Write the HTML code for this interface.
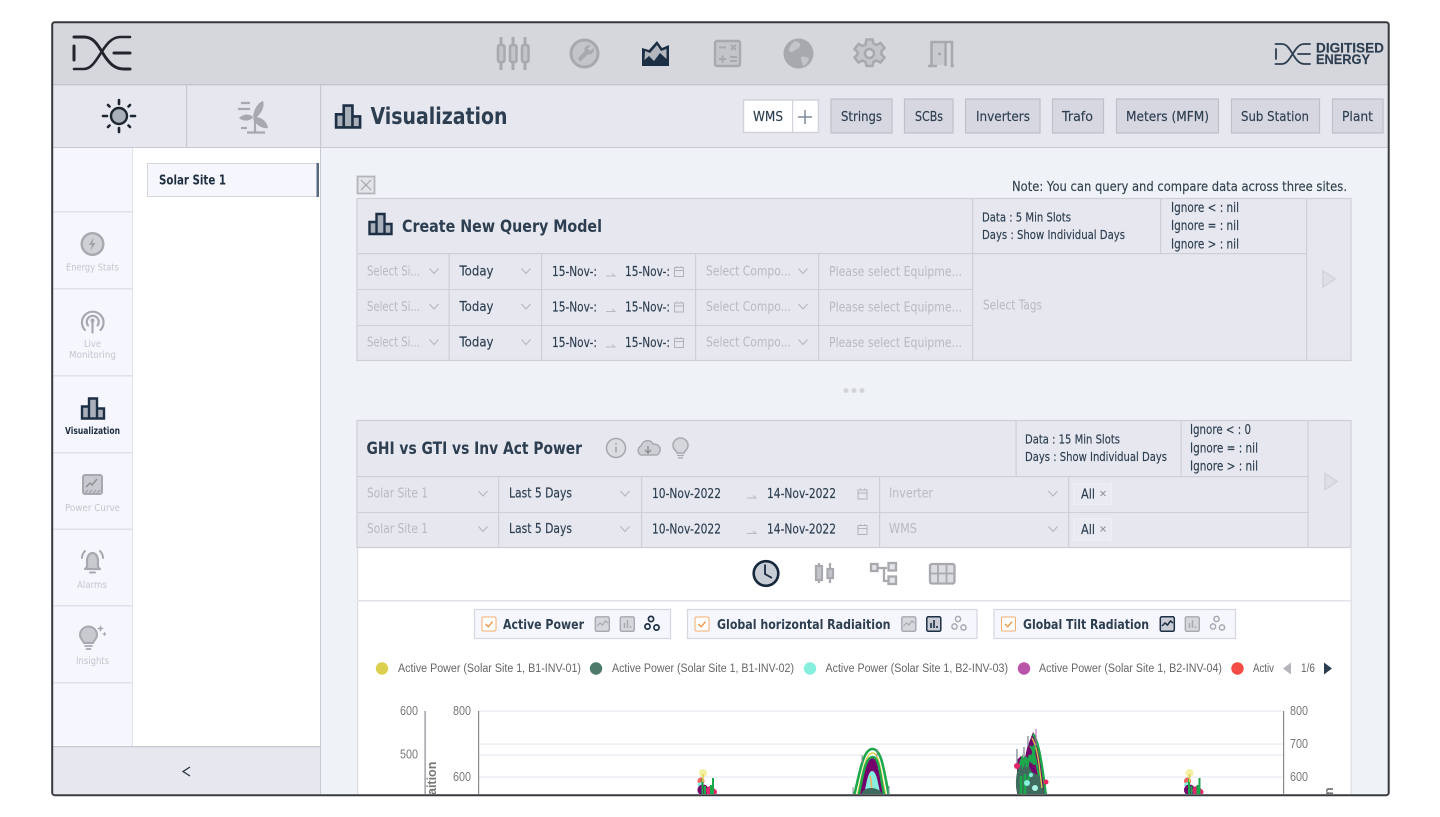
<!DOCTYPE html>
<html><head><meta charset="utf-8"><title>Visualization</title>
<style>
html,body{margin:0;padding:0;background:#fff;width:1440px;height:817px;overflow:hidden}
svg{display:block}
text{font-family:"DejaVu Sans","Liberation Sans",sans-serif;font-size:13px;fill:#2c3e50;stroke:#2c3e50;stroke-width:.15px}
.p{fill:#b9bac1;stroke:none}
.b{font-weight:bold;stroke:none}
.n{font-size:10px;fill:#c4c5cb;stroke:none}
.l{font-family:"Liberation Sans",sans-serif;font-size:11.5px;fill:#666;stroke:none}
.a{font-family:"Liberation Sans",sans-serif;font-size:12.5px;fill:#777;stroke:none}
.s{font-size:12px}
</style></head><body>
<svg width="1440" height="817" viewBox="0 0 1440 817" xmlns="http://www.w3.org/2000/svg">
<defs>
<clipPath id="fr"><rect x="53" y="23" width="1335" height="771"/></clipPath>
<g id="bars"><path d="M1 9h7v12H1zM8 1h8v20H8zM16 11h7v10h-7z" fill="#aab0ba" stroke="#1c2f45" stroke-width="2.4"/></g>
<path id="ch" d="M-4.5-2.5L0 2.5L4.500-2.500" fill="none" stroke="#b3b4bb" stroke-width="1"/>
<g id="cal" fill="none" stroke="#b3b4bb" stroke-width="1"><rect x="-4.500" y="-4" width="9" height="9"/><path d="M-4.500-1h9M-2-5.500v2M2-5.500v2"/></g>
<path id="ar" d="M0 0h9l-3-2.500" fill="none" stroke="#b9bac1" stroke-width="1"/>
<g id="ln"><rect x=".8" y=".8" width="14" height="14.500" rx="1.500" fill="#d6d7dd" stroke="#a8a9af" stroke-width="1.400"/><path d="M2.500 10l3-3 2.500 2 3-4 2.500 2" fill="none" stroke="#a8a9af" stroke-width="1.200"/></g>
<g id="lnd"><rect x=".8" y=".8" width="14" height="14.500" rx="1.500" fill="#c9ccd4" stroke="#1c2f45" stroke-width="1.500"/><path d="M2.500 10l3-3 2.500 2 3-4 2.500 2" fill="none" stroke="#1c2f45" stroke-width="1.500"/></g>
<g id="br"><rect x=".8" y=".8" width="14" height="14.500" rx="1.500" fill="#d6d7dd" stroke="#a8a9af" stroke-width="1.400"/><path d="M5 12V7M8 12V4M11 12v-2" fill="none" stroke="#a8a9af" stroke-width="1.400"/></g>
<g id="brd"><rect x=".8" y=".8" width="14" height="14.500" rx="1.500" fill="#c9ccd4" stroke="#1c2f45" stroke-width="1.500"/><path d="M5 12V7M8 12V4M11 12v-2" fill="none" stroke="#1c2f45" stroke-width="1.600"/></g>
<g id="sc" fill="none" stroke="#a8a9af" stroke-width="1.500"><circle cx="7" cy="3.500" r="2.600"/><circle cx="3.500" cy="11" r="2.600"/><circle cx="12.500" cy="12" r="2.600"/></g>
<g id="scd" fill="none" stroke="#1c2f45" stroke-width="1.700"><circle cx="7" cy="3.500" r="2.600"/><circle cx="3.500" cy="11" r="2.600"/><circle cx="12.500" cy="12" r="2.600"/></g>
<g id="ck"><rect x=".5" y=".5" width="14" height="14" rx="1.500" fill="#fff" stroke="#f5ae6c"/><path d="M4 7.500l2.800 2.800L11 5" fill="none" stroke="#f0923c" stroke-width="1.300"/></g>
</defs>

<rect width="1440" height="817" fill="#fff"/>
<g clip-path="url(#fr)">
<rect x="53" y="23" width="1335" height="62" fill="#d6d7dc"/>
<rect x="53" y="85" width="1335" height="63" fill="#e6e7ef"/>
<rect x="53" y="84" width="1335" height="1.300" fill="#c4c5cc"/>
<rect x="53" y="147" width="1335" height="1.300" fill="#c8c9d0"/>
<rect x="186" y="85" width="1.200" height="63" fill="#c8c9d0"/>
<rect x="320" y="85" width="1.200" height="710" fill="#c8c9d0"/>
<rect x="53" y="148" width="79" height="598" fill="#f6f7fe"/>
<rect x="132" y="148" width="1" height="598" fill="#e1e2e9"/>
<rect x="133" y="148" width="187" height="598" fill="#fff"/>
<rect x="321" y="148" width="1067" height="647" fill="#eff2f6"/>
<rect x="53" y="746" width="267" height="49" fill="#e6e7ef"/>
<rect x="53" y="746" width="267" height="1.200" fill="#c8c9d0"/>
<path d="M190 767l-7 4.500 7 4.500" fill="none" stroke="#25303c" stroke-width="1.200"/>

<!-- nav separators -->
<g fill="#e0e1e9"><rect x="53" y="211" width="79" height="1.500"/><rect x="53" y="288" width="79" height="1.500"/><rect x="53" y="375" width="79" height="1.500"/><rect x="53" y="452" width="79" height="1.500"/><rect x="53" y="528.500" width="79" height="1.500"/><rect x="53" y="605" width="79" height="1.500"/><rect x="53" y="682" width="79" height="1.500"/></g>

<!-- logo -->
<g fill="none" stroke="#22252c" stroke-width="3" stroke-linecap="round">
<path d="M74 37H84C96 37 100 50 106 58C111 65 116 69 124 69H130"/><path d="M74 69H84C98 69 103 37 120 37H130" stroke-width="2.600"/><path d="M114 53H130"/><path d="M74 46V60"/>
</g>
<g fill="none" stroke="#2c3e50" stroke-width="1.800" stroke-linecap="round">
<path d="M1275.500 44H1282C1288 44 1291 52 1294 56C1297 61 1300 64 1305 64H1310"/><path d="M1275.500 64H1282C1291 64 1294 44 1304 44H1310"/><path d="M1298 54H1310"/><path d="M1276 49V59"/>
</g>
<text x="1316" y="52.500" textLength="68" lengthAdjust="spacingAndGlyphs" style="font-family:'Liberation Sans',sans-serif;font-weight:bold;font-size:13.5px">DIGITISED</text>
<text x="1316" y="64" textLength="54" lengthAdjust="spacingAndGlyphs" style="font-family:'Liberation Sans',sans-serif;font-weight:bold;font-size:13.5px">ENERGY</text>

<!-- top icons -->
<g fill="#c4c5ca" stroke="#a8a9ae" stroke-width="2.600">
<path d="M501 37V70M513 37V70M525 37V70" fill="none" stroke-width="3"/>
<rect x="498" y="45" width="6.500" height="17" rx="2"/><rect x="510" y="45" width="6.500" height="17" rx="2"/><rect x="522" y="45" width="6.500" height="17" rx="2"/>
<circle cx="584.500" cy="53.500" r="13.500" stroke-width="3"/>
</g>
<path d="M591 45.500a5 5 0 0 0-6.500 6l-7 7 3 3 7-7a5 5 0 0 0 6-6.500l-3.300 3-2.700-2.500z" fill="#a8a9ae"/>
<path d="M642 48L649 50L657 41L662 48L669 45V66H642z" fill="#1c2f45"/>
<path d="M645 51L650 53L657 45L661 51L666.500 49V59L660 53L654 61L649 56L644.500 60z" fill="#b3b6bd"/>
<rect x="715" y="41" width="25" height="25" rx="2" fill="#c4c5ca" stroke="#a8a9ae" stroke-width="2.400"/>
<path d="M719 47.500h7M731 45l5 5M736 45l-5 5M719 59h7M722.500 55.500v7M730 57h7M730 61h7" fill="none" stroke="#a8a9ae" stroke-width="2"/>
<circle cx="798.500" cy="53.500" r="15" fill="#a8a9ae"/>
<path d="M795 41c3 1 6 2 5 5s-4 3-6 5-4 1-5 0c0-4 3-8 6-10zM801 57c3-1 6 0 8 2-1 3-3 6-6 7 0-3-3-6-2-9z" fill="#c4c5ca"/>
<g transform="translate(869.500 53.500)"><path d="M-3-14h6l1 4 3 1.500 4-2 4 5-3 3v3.500l3 3-4 5-4-2-3 1.500-1 4h-6l-1-4-3-1.500-4 2-4-5 3-3V-1.500l-3-3 4-5 4 2 3-1.500z" fill="#c4c5ca" stroke="#a8a9ae" stroke-width="2.500"/><circle r="4.500" fill="#d6d7dc" stroke="#a8a9ae" stroke-width="2.500"/></g>
<rect x="932" y="43" width="12" height="22" fill="#c9cacf"/><circle cx="939.500" cy="54" r="1.300" fill="#9a9ba1"/>
<path d="M928 66h9M931.500 66V42h14v24M937 42h15v24h2" fill="none" stroke="#a8a9ae" stroke-width="2.600"/>

<!-- sun -->
<circle cx="119" cy="116" r="8" fill="#aab0ba" stroke="#1c2530" stroke-width="2.400"/>
<path d="M119 100v4M119 128v4M103 116h4M131 116h4M108 105l1.500 1.500M130 105l-1.500 1.500M108 127l1.500-1.500M130 127l-1.500-1.500" stroke="#1c2530" stroke-width="2.600" stroke-linecap="round"/>
<!-- wind -->
<g fill="#a8a9ae">
<path d="M253 117C254 108 259 102 263 101C265 106 262 113 255 119z"/>
<path d="M255 117C262 117 267 122 268 128C262 129 256 125 253 119z"/>
<path d="M252 116C247 113 242 115 239 118C244 122 249 121 253 118z"/>
</g>
<path d="M255 120V132M247 132.500H265M238 109H250M241 103H250M241 128H247" fill="none" stroke="#a8a9ae" stroke-width="2.200"/>

<!-- Site -->
<rect x="147.500" y="163.500" width="171" height="33" fill="#f6f7fe" stroke="#d5d6dd"/>
<rect x="316.500" y="163" width="2.500" height="34" fill="#566a80"/>
<text class="b" x="159" y="184.500" textLength="67" lengthAdjust="spacingAndGlyphs" style="fill:#1f2f40">Solar Site 1</text>

<!-- Nav -->
<circle cx="92.500" cy="244" r="10.800" fill="#cfd0d6" stroke="#a8a9ae" stroke-width="2.400"/>
<path d="M94 237l-5 8h3l-1.500 6 5-8h-3z" fill="#a0a1a7"/>
<text class="n" x="66" y="270.500" textLength="53" lengthAdjust="spacingAndGlyphs">Energy Stats</text>
<g fill="none" stroke="#a8a9ae" stroke-width="2.200" stroke-linecap="round">
<path d="M85 330a10.800 10.800 0 1 1 15.500 0"/><path d="M88 325.500a6 6 0 1 1 9.500 0"/><path d="M92.500 322v10.500"/></g>
<circle cx="92.500" cy="320.500" r="2" fill="#a8a9ae"/>
<text class="n" x="84" y="347" textLength="17" lengthAdjust="spacingAndGlyphs">Live</text>
<text class="n" x="69" y="358" textLength="47" lengthAdjust="spacingAndGlyphs">Monitoring</text>
<use href="#bars" transform="translate(81 397.500)"/>
<text class="n b" x="65" y="434" textLength="55" lengthAdjust="spacingAndGlyphs" style="fill:#1e2e40">Visualization</text>
<rect x="83" y="475" width="19" height="19" rx="2" fill="#c9cacf" stroke="#a8a9ae" stroke-width="2"/>
<path d="M86 487l4-4 2 2 5-6" fill="none" stroke="#8f9096" stroke-width="1.500"/><path d="M85 493l3-3M89 493l3-3M93 493l3-3M97 493l3-3" stroke="#9a9ba1"/>
<text class="n" x="65" y="511" textLength="55" lengthAdjust="spacingAndGlyphs">Power Curve</text>
<path d="M85 569c3-2 2-4 2-8 0-4 2-8 5.500-8s5.500 4 5.500 8c0 4-1 6 2 8z" fill="#c9cacf" stroke="#a8a9ae" stroke-width="2.200" stroke-linejoin="round"/>
<path d="M82 558c0-3 1-5 3-7M103 558c0-3-1-5-3-7M90 572.500h5" fill="none" stroke="#a8a9ae" stroke-width="2" stroke-linecap="round"/>
<text class="n" x="77" y="588" textLength="30" lengthAdjust="spacingAndGlyphs">Alarms</text>
<path d="M84 643c-1-3-4-4-4-8a8.500 8.500 0 0 1 17 0c0 4-3 5-4 8z" fill="#c9cacf" stroke="#a8a9ae" stroke-width="2"/>
<path d="M85 646h7M86.500 649h4" stroke="#a8a9ae" stroke-width="1.800" stroke-linecap="round"/>
<path d="M100.500 625l1 2.500 2.500 1-2.500 1-1 2.500-1-2.500-2.500-1 2.500-1zM104.500 631.500l.7 1.800 1.800.7-1.800.7-.7 1.800-.7-1.800-1.800-.7 1.800-.7z" fill="#a8a9ae"/>
<text class="n" x="76" y="664" textLength="33" lengthAdjust="spacingAndGlyphs">Insights</text>

<!-- Title bar -->
<use href="#bars" transform="translate(335 104.500) scale(1.090)"/>
<text class="b" x="370.500" y="124" textLength="137" lengthAdjust="spacingAndGlyphs" style="font-size:23px">Visualization</text>
<rect x="743.500" y="100" width="75" height="32.500" fill="#fff" stroke="#d2d3da" stroke-width="1.500"/>
<rect x="792" y="100" width="1.200" height="32" fill="#d2d3da"/>
<path d="M798 117h14M805 110v14" stroke="#7d8a99" stroke-width="1.500"/>
<text x="753" y="121" textLength="30" lengthAdjust="spacingAndGlyphs">WMS</text>
<g fill="#d6d7e0" stroke="#bfc0c8" stroke-width="1.200">
<rect x="831" y="99" width="61" height="34"/><rect x="904.500" y="99" width="48.500" height="34"/><rect x="965.500" y="99" width="74.500" height="34"/><rect x="1052.500" y="99" width="51" height="34"/><rect x="1116.500" y="99" width="102" height="34"/><rect x="1231.500" y="99" width="88" height="34"/><rect x="1332.500" y="99" width="50.500" height="34"/>
</g>
<text x="841" y="121" textLength="41" lengthAdjust="spacingAndGlyphs">Strings</text>
<text x="915" y="121" textLength="28" lengthAdjust="spacingAndGlyphs">SCBs</text>
<text x="976" y="121" textLength="54" lengthAdjust="spacingAndGlyphs">Inverters</text>
<text x="1062" y="121" textLength="31" lengthAdjust="spacingAndGlyphs">Trafo</text>
<text x="1126" y="121" textLength="83" lengthAdjust="spacingAndGlyphs">Meters (MFM)</text>
<text x="1241" y="121" textLength="68" lengthAdjust="spacingAndGlyphs">Sub Station</text>
<text x="1342" y="121" textLength="31" lengthAdjust="spacingAndGlyphs">Plant</text>

<!-- Close + note -->
<rect x="357.500" y="176.500" width="17" height="17" fill="#e3e4ea" stroke="#b4b5bb" stroke-width="1.800"/>
<path d="M361 180l10 10M371 180l-10 10" stroke="#a4a5ab" stroke-width="1.200"/>
<text x="1012" y="191" textLength="335" lengthAdjust="spacingAndGlyphs" style="fill:#33424f">Note: You can query and compare data across three sites.</text>

<!-- Query panel -->
<rect x="357" y="198.500" width="994" height="162" fill="#e6e7ef" stroke="#cfd0d7" stroke-width="1.200"/>
<g fill="#cfd0d7">
<rect x="357" y="253" width="949" height="1.200"/><rect x="357" y="289" width="615" height="1"/><rect x="357" y="325" width="615" height="1"/>
<rect x="448.500" y="253" width="1.200" height="107"/><rect x="541" y="253" width="1.200" height="107"/><rect x="695" y="253" width="1.200" height="107"/><rect x="818" y="253" width="1.200" height="107"/>
<rect x="972" y="198" width="1.200" height="162"/><rect x="1160" y="198" width="1.200" height="55"/><rect x="1306" y="198" width="1.200" height="162"/>
</g>
<use href="#bars" transform="translate(368.500 213)"/>
<text class="b" x="402" y="232" textLength="200" lengthAdjust="spacingAndGlyphs" style="font-size:17px">Create New Query Model</text>
<text class="s" x="982" y="221.500" textLength="89" lengthAdjust="spacingAndGlyphs">Data : 5 Min Slots</text>
<text class="s" x="982" y="239" textLength="143" lengthAdjust="spacingAndGlyphs">Days : Show Individual Days</text>
<text x="1171" y="212" textLength="68" lengthAdjust="spacingAndGlyphs">Ignore &lt; : nil</text>
<text x="1171" y="230" textLength="68" lengthAdjust="spacingAndGlyphs">Ignore = : nil</text>
<text x="1171" y="248.500" textLength="68" lengthAdjust="spacingAndGlyphs">Ignore &gt; : nil</text>
<text class="p" x="983" y="309.500" textLength="59" lengthAdjust="spacingAndGlyphs">Select Tags</text>
<path d="M1323 271l12 8-12 8z" fill="#dfe0e6" stroke="#d2d3d9" stroke-width="1.500"/>

<g id="r1">
<text class="p" x="367" y="275.500" textLength="53" lengthAdjust="spacingAndGlyphs">Select Si...</text>
<use href="#ch" x="434" y="271"/>
<text x="459.500" y="275.500" textLength="34" lengthAdjust="spacingAndGlyphs">Today</text>
<use href="#ch" x="526" y="271"/>
<text x="552" y="276" textLength="45" lengthAdjust="spacingAndGlyphs">15-Nov-:</text>
<use href="#ar" x="606" y="276"/>
<text x="625" y="276" textLength="45" lengthAdjust="spacingAndGlyphs">15-Nov-:</text>
<use href="#cal" x="679" y="271.500"/>
<text class="p" x="706" y="275.500" textLength="85" lengthAdjust="spacingAndGlyphs">Select Compo...</text>
<use href="#ch" x="803" y="271"/>
<text class="p" x="829" y="276" textLength="133" lengthAdjust="spacingAndGlyphs">Please select Equipme...</text>
</g>
<use href="#r1" y="35.500"/>
<use href="#r1" y="71"/>

<circle cx="846" cy="390.500" r="2.500" fill="#d3d4da"/><circle cx="854" cy="390.500" r="2.500" fill="#d3d4da"/><circle cx="862" cy="390.500" r="2.500" fill="#d3d4da"/>

<!-- Panel 2 -->
<rect x="357" y="420.500" width="994" height="127" fill="#e6e7ef" stroke="#cfd0d7" stroke-width="1.200"/>
<rect x="357" y="547" width="994" height="248" fill="#fff"/>
<rect x="357" y="547" width="1.200" height="248" fill="#dcdde3"/><rect x="1350.500" y="547" width="1.200" height="248" fill="#dcdde3"/>
<rect x="357" y="547" width="994" height="1.200" fill="#cfd0d7"/>
<rect x="357" y="600" width="994" height="1.500" fill="#e2e3e9"/>
<g fill="#cfd0d7">
<rect x="357" y="476" width="951" height="1.200"/><rect x="357" y="512" width="951" height="1"/>
<rect x="498" y="476" width="1.200" height="71"/><rect x="641" y="476" width="1.200" height="71"/><rect x="879" y="476" width="1.200" height="71"/><rect x="1068" y="476" width="1.200" height="71"/>
<rect x="1015.500" y="420" width="1.200" height="56"/><rect x="1180.500" y="420" width="1.200" height="56"/><rect x="1307.500" y="420" width="1.200" height="127"/>
</g>
<text class="b" x="366.500" y="454" textLength="215.500" lengthAdjust="spacingAndGlyphs" style="font-size:17px">GHI vs GTI vs Inv Act Power</text>
<circle cx="616" cy="448" r="9.500" fill="#dcdde3" stroke="#a8a9ae" stroke-width="1.500"/>
<path d="M616 446.500v6M616 443v1.500" stroke="#a0a1a7" stroke-width="1.500"/>
<path d="M641 455a5 5 0 0 1 0-9c1-5 9-8 12-2 5 0 8 3 7 7-1 3-2 4-4 4z" fill="#cfd0d6" stroke="#a8a9ae" stroke-width="1.500"/>
<path d="M648 446v6M645 450l3 3 3-3" fill="none" stroke="#8f9096" stroke-width="1.500"/>
<path d="M677 453c0-2-4-3-4-7.500a7.500 7.500 0 0 1 15 0c0 4.500-4 5.500-4 7.500z" fill="#d6d7dd" stroke="#a8a9ae" stroke-width="1.500"/>
<path d="M677 455.500h7M678 458h5" stroke="#a8a9ae" stroke-width="1.300"/>
<text class="s" x="1025" y="443.500" textLength="95" lengthAdjust="spacingAndGlyphs">Data : 15 Min Slots</text>
<text class="s" x="1025" y="461" textLength="142" lengthAdjust="spacingAndGlyphs">Days : Show Individual Days</text>
<text x="1190" y="434" textLength="61" lengthAdjust="spacingAndGlyphs">Ignore &lt; : 0</text>
<text x="1190" y="452.500" textLength="68" lengthAdjust="spacingAndGlyphs">Ignore = : nil</text>
<text x="1190" y="470.500" textLength="68" lengthAdjust="spacingAndGlyphs">Ignore &gt; : nil</text>
<path d="M1325 473.500l12 8-12 8z" fill="#dfe0e6" stroke="#d2d3d9" stroke-width="1.500"/>

<g id="r2">
<text class="p" x="367" y="497.500" textLength="61" lengthAdjust="spacingAndGlyphs">Solar Site 1</text>
<use href="#ch" x="483" y="493.500"/>
<text x="509" y="497.500" textLength="63" lengthAdjust="spacingAndGlyphs">Last 5 Days</text>
<use href="#ch" x="625" y="493.500"/>
<text x="652" y="498" textLength="69" lengthAdjust="spacingAndGlyphs">10-Nov-2022</text>
<use href="#ar" x="747" y="498"/>
<text x="767" y="498" textLength="69" lengthAdjust="spacingAndGlyphs">14-Nov-2022</text>
<use href="#cal" x="862.500" y="494"/>
<use href="#ch" x="1053" y="493.500"/>
<rect x="1073.500" y="483.500" width="38" height="21" fill="#eaebf2" stroke="#eef0f5"/>
<text x="1081" y="498.500" textLength="14" lengthAdjust="spacingAndGlyphs">All</text>
<path d="M1100.500 491l5 5M1105.500 491l-5 5" stroke="#8d9098" stroke-width=".9"/>
</g>
<use href="#r2" y="35.500"/>
<text class="p" x="889" y="497.500" textLength="44" lengthAdjust="spacingAndGlyphs">Inverter</text>
<text class="p" x="889" y="533" textLength="28" lengthAdjust="spacingAndGlyphs">WMS</text>

<!-- tabs -->
<circle cx="766" cy="573.500" r="12.300" fill="#c9ced6" stroke="#16283c" stroke-width="2.600"/>
<path d="M765 564.500v9.500l7 4" fill="none" stroke="#16283c" stroke-width="1.800"/>
<path d="M819 563v20M830 563v20" stroke="#a8a9ae" stroke-width="2.200"/>
<rect x="816" y="566" width="6" height="14" fill="#c4c5ca" stroke="#a8a9ae" stroke-width="2.200"/>
<rect x="827.500" y="569" width="5.500" height="9" fill="#c4c5ca" stroke="#a8a9ae" stroke-width="2.200"/>
<g fill="#e3e4e8" stroke="#a8a9ae" stroke-width="2.300">
<path d="M877 568h10M884 568v13h5" fill="none"/>
<rect x="871" y="564" width="6.500" height="7"/><rect x="888.500" y="563" width="7.500" height="7.500"/><rect x="888.500" y="576.500" width="7.500" height="7.500"/>
<rect x="930" y="564" width="24.500" height="19.500" rx="2" fill="#dcdde1"/>
<path d="M938 564v19.500M946.500 564v19.500M930 573.500h24.500" fill="none" stroke-width="1.800"/>
</g>

<!-- toggles -->
<g fill="#f6f7fe" stroke="#d5d6e0" stroke-width="1.200">
<rect x="474.500" y="609.500" width="196" height="29"/><rect x="687.500" y="609.500" width="289.500" height="29"/><rect x="994" y="609.500" width="241.500" height="29"/>
</g>
<use href="#ck" x="481.500" y="616.500"/><use href="#ck" x="694.500" y="616.500"/><use href="#ck" x="1001" y="616.500"/>
<text class="b" x="503" y="629" textLength="81" lengthAdjust="spacingAndGlyphs">Active Power</text>
<text class="b" x="717" y="629" textLength="173.500" lengthAdjust="spacingAndGlyphs">Global horizontal Radiaition</text>
<text class="b" x="1023" y="629" textLength="126" lengthAdjust="spacingAndGlyphs">Global Tilt Radiation</text>
<use href="#ln" x="594.500" y="616"/><use href="#br" x="619.500" y="616"/><use href="#scd" x="644" y="615.500"/>
<use href="#ln" x="901" y="616"/><use href="#brd" x="926" y="616"/><use href="#sc" x="951" y="615.500"/>
<use href="#lnd" x="1159.500" y="616"/><use href="#br" x="1184.500" y="616"/><use href="#sc" x="1209.500" y="615.500"/>

<!-- legend -->
<circle cx="382" cy="668.500" r="6.200" fill="#dccf4e"/>
<circle cx="596" cy="668.500" r="6.200" fill="#4e7a6c"/>
<circle cx="810" cy="668.500" r="6.200" fill="#86efde"/>
<circle cx="1024" cy="668.500" r="6.200" fill="#b855a8"/>
<circle cx="1237.500" cy="668.500" r="6.200" fill="#f54c45"/>
<text class="l" x="398" y="672" textLength="183" lengthAdjust="spacingAndGlyphs">Active Power (Solar Site 1, B1-INV-01)</text>
<text class="l" x="612" y="672" textLength="182" lengthAdjust="spacingAndGlyphs">Active Power (Solar Site 1, B1-INV-02)</text>
<text class="l" x="825.500" y="672" textLength="182.500" lengthAdjust="spacingAndGlyphs">Active Power (Solar Site 1, B2-INV-03)</text>
<text class="l" x="1039" y="672" textLength="183" lengthAdjust="spacingAndGlyphs">Active Power (Solar Site 1, B2-INV-04)</text>
<text class="l" x="1253" y="672" textLength="21" lengthAdjust="spacingAndGlyphs">Activ</text>
<path d="M1291 662.500v12l-8-6z" fill="#b3b5ba"/>
<text class="l" x="1301" y="672" textLength="14" lengthAdjust="spacingAndGlyphs">1/6</text>
<path d="M1324 662.500v12l8-6z" fill="#2c3e50"/>

<!-- chart -->
<g fill="#e8e9f2"><rect x="478" y="710.500" width="805" height="1.200"/><rect x="478" y="743.500" width="805" height="1.200"/><rect x="478" y="754.500" width="805" height="1.200"/><rect x="478" y="776.500" width="805" height="1.200"/></g>
<rect x="424.500" y="711" width="1.200" height="84" fill="#8a8b90"/>
<rect x="478" y="711" width="1.200" height="84" fill="#8a8b90"/>
<rect x="1283" y="711" width="1.200" height="84" fill="#8a8b90"/>
<text class="a" x="400" y="715" textLength="18" lengthAdjust="spacingAndGlyphs">600</text>
<text class="a" x="400" y="758.500" textLength="18" lengthAdjust="spacingAndGlyphs">500</text>
<text class="a" x="453" y="715" textLength="18" lengthAdjust="spacingAndGlyphs">800</text>
<text class="a" x="453" y="781" textLength="18" lengthAdjust="spacingAndGlyphs">600</text>
<text class="a" x="1290" y="715" textLength="18" lengthAdjust="spacingAndGlyphs">800</text>
<text class="a" x="1290" y="748" textLength="18" lengthAdjust="spacingAndGlyphs">700</text>
<text class="a" x="1290" y="781" textLength="18" lengthAdjust="spacingAndGlyphs">600</text>
<text transform="translate(436 795) rotate(-90)" style="font-family:'Liberation Sans',sans-serif;font-weight:bold;font-size:12.500px;fill:#777;stroke:none">aition</text>
<text transform="translate(1333 795) rotate(-90)" style="font-family:'Liberation Sans',sans-serif;font-weight:bold;font-size:12.500px;fill:#777;stroke:none">n</text>

<!-- blob 1 -->
<g id="b1">
<circle cx="703" cy="773" r="4" fill="#f3f0a0"/>
<circle cx="701" cy="781" r="3.500" fill="#f5645a"/>
<circle cx="700.500" cy="785" r="2.800" fill="#86efde"/>
<circle cx="703" cy="790" r="5.500" fill="#74006c"/>
<circle cx="710.500" cy="790.500" r="4.500" fill="#e5246e"/>
<circle cx="714" cy="792" r="3" fill="#e5246e"/>
<path d="M702.500 779v17M705 786v10M713 778v18M711 785v11" stroke="#19a84a" stroke-width="2"/>
<path d="M703 774v8" stroke="#dccf4e" stroke-width="1.500"/>
</g>
<use href="#b1" x="486.500"/>

<!-- blob 2 -->
<path d="M854 796C860 772 863 749 872.500 749C882 749 884 772 889 796" fill="none" stroke="#1ea84c" stroke-width="2.600"/>
<path d="M857 796C862 776 865 753 872.500 753C880 753 881 776 886 796" fill="#fff" stroke="#d9d24c" stroke-width="1.400"/>
<path d="M858.500 796C862.500 778 865 757 872.500 757C880 757 880 778 884.500 796" fill="#74006c" stroke="#1ea84c" stroke-width="2.400"/>
<path d="M864 796C866 785 868 771 872 771C877 771 878 785 881 796z" fill="#86efde"/>
<path d="M870 776c2 6 1 9 2 13" stroke="#f3b25b" stroke-width="1.500" fill="none"/>
<path d="M861 796c0-5 5-8 10-8s12 3 12 8z" fill="#3f6a5e"/>
<path d="M853 787v9M862 755v8M877 749v8M889 786v9" stroke="#8a8f9c" stroke-width="1"/>

<!-- blob 3 -->
<path d="M1017 796V760l4-4 3 6 3-14 3-8 3-8c6 8 10 30 14 64z" fill="#74006c"/>
<path d="M1018 796c-2-6-3-12-1-24 2-8 5-14 8-16l3 8 4 8 8 4 5 20z" fill="#3f6a5e"/>
<path d="M1033 734c6 8 9 30 13 62" fill="none" stroke="#1ea84c" stroke-width="2.400"/>
<path d="M1032 738c5 8 7 24 10 50" fill="none" stroke="#d9d24c" stroke-width="1.300"/>
<path d="M1030 746c5 6 6 16 9 30" fill="none" stroke="#1ea84c" stroke-width="2"/>
<path d="M1019 767l3-8 1 6 3-8 1 10 3-12 2 8 2-18 0 20" fill="none" stroke="#1ea84c" stroke-width="2.600"/>
<path d="M1021 796v-20M1025 774v22M1028 780l3-8" stroke="#19a84a" stroke-width="2.500"/>
<circle cx="1017" cy="766" r="3" fill="#e5246e"/><circle cx="1046" cy="782" r="2.500" fill="#f0245e"/><circle cx="1027" cy="783" r="3" fill="#86efde"/><circle cx="1035" cy="788" r="3" fill="#a8f3e4"/><circle cx="1031" cy="775" r="2" fill="#86efde"/>
<path d="M1036 729v18" stroke="#b855a8" stroke-width="1"/><path d="M1017 749v14M1024 747v10M1028 736v10" stroke="#7e8a96" stroke-width="1.300"/>
</g>

<!-- frame -->
<rect x="52.200" y="22.200" width="1336.500" height="773" rx="2.500" fill="none" stroke="#37393f" stroke-width="2"/>
</svg>
</body></html>
